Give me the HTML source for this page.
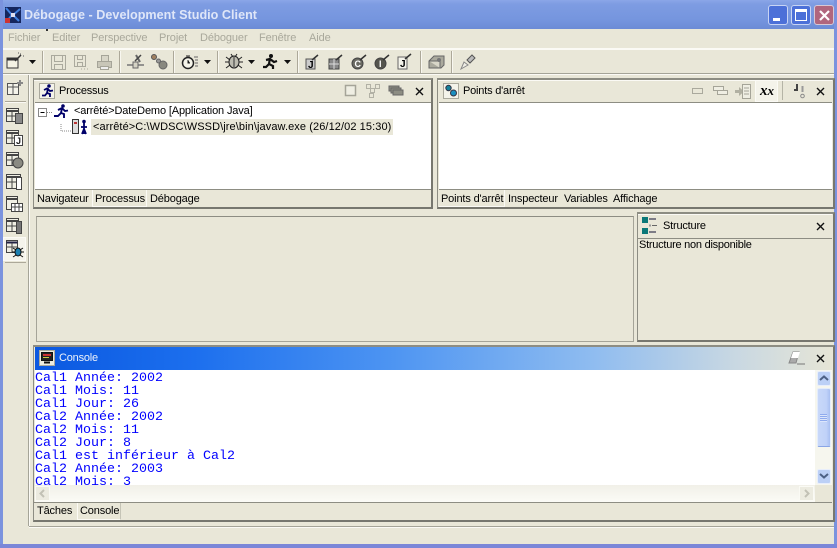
<!DOCTYPE html>
<html><head><meta charset="utf-8"><style>
*{box-sizing:border-box}
html,body{margin:0;padding:0}
body{width:837px;height:548px;position:relative;overflow:hidden;background:#e9e7d8;font-family:"Liberation Sans",sans-serif;font-size:11px;color:#000}
.a{position:absolute}
.t{position:absolute;white-space:nowrap;line-height:14px;font-size:11px;letter-spacing:-.2px}
.panel{position:absolute;background:#e9e7d8;border:1px solid #8d8d83;border-right:2px solid #77776f;border-bottom:2px solid #77776f;border-top:2px solid #8d8d83}
.white{position:absolute;background:#fff;border-top:1px solid #8d8d83;border-bottom:1px solid #8d8d83}
.tab{position:absolute;white-space:nowrap;line-height:15px;font-size:11px;letter-spacing:-.15px}
.menu{position:absolute;top:31px;color:#a9a89b;font-size:11px;letter-spacing:-.1px;line-height:14px;white-space:nowrap}
.sep{position:absolute;height:22px;top:51px;background:#aca899;border-right:1px solid #f8f7f0;width:2px}
svg{position:absolute;overflow:visible}
.con{position:absolute;left:35px;font-family:"Liberation Mono",monospace;font-size:13.33px;line-height:13px;color:#0000ff;white-space:pre}
</style></head><body>
<!-- window frame -->
<div class="a" style="left:0;top:0;width:837px;height:29px;background:linear-gradient(#8ba6e8 0,#7e9ce2 4px,#7595de 20px,#6c8bd6 29px)"></div>
<div class="a" style="left:0;top:0;width:3px;height:548px;background:#7b93de"></div>
<div class="a" style="left:834px;top:0;width:3px;height:548px;background:#7b93de"></div>
<div class="a" style="left:0;top:544px;width:837px;height:4px;background:#7b87d8"></div>
<svg style="left:5px;top:7px" width="16" height="16"><rect width="16" height="16" fill="#15265e"/><path d="M1 1l6 7-5 6M15 2L8 8l6 6" stroke="#3f7fe0" stroke-width="2" fill="none"/><rect x="6" y="6" width="4" height="4" fill="#dde"/><rect x="0" y="11" width="5" height="5" fill="#c33"/></svg>
<div class="t" style="left:24px;top:8px;color:#dfe6f8;font-weight:bold;font-size:12.6px;letter-spacing:.02px">Débogage - Development Studio Client</div>
<!-- window buttons -->
<div class="a" style="left:768px;top:5px;width:20px;height:20px;border-radius:3px;background:#4c70d8;border:1px solid #c8d4f4"><div class="a" style="left:4px;top:12px;width:7px;height:3px;background:#fff"></div></div>
<div class="a" style="left:791px;top:5px;width:20px;height:20px;border-radius:3px;background:#4c70d8;border:1px solid #c8d4f4"><div class="a" style="left:3px;top:3px;width:12px;height:12px;border:1px solid #fff;border-top:3px solid #fff"></div></div>
<div class="a" style="left:814px;top:5px;width:20px;height:20px;border-radius:3px;background:#b0667e;border:1px solid #d8c8d4"><svg style="left:4px;top:4px" width="11" height="11"><path d="M1 1l9 9M10 1l-9 9" stroke="#fff" stroke-width="2.2"/></svg></div>
<!-- menu -->
<div class="a" style="left:3px;top:29px;width:831px;height:20px;background:#e9e7d8"></div>
<div class="menu" style="left:8px">Fichier</div>
<div class="menu" style="left:52px">Editer</div>
<div class="menu" style="left:91px">Perspective</div>
<div class="menu" style="left:159px">Projet</div>
<div class="menu" style="left:200px">Déboguer</div>
<div class="menu" style="left:259px">Fenêtre</div>
<div class="menu" style="left:309px">Aide</div>
<div class="a" style="left:46px;top:29px;width:2px;height:2px;background:#333"></div>
<div class="a" style="left:3px;top:48px;width:831px;height:2px;background:#fbfaf5"></div>
<div class="a" style="left:3px;top:73px;width:831px;height:1px;background:#a5a498"></div>
<div class="a" style="left:3px;top:74px;width:831px;height:1px;background:#fbfaf5"></div>
<!-- toolbar -->
<svg style="left:6px;top:53px" width="20" height="17"><rect x="1" y="5" width="11" height="10" fill="#f4f2e4" stroke="#333"/><rect x="1" y="5" width="11" height="2.5" fill="#333"/><path d="M9 8l6-6" stroke="#333" stroke-width="1.500"/><path d="M14 1h1M17 3h1M12 0h1" stroke="#555"/></svg>
<svg style="left:29px;top:60px" width="7" height="4"><path d="M0 0h7L3.500 4z" fill="#111"/></svg>
<div class="sep" style="left:42px"></div>
<svg style="left:51px;top:55px" width="15" height="15" fill="none" stroke="#aaa99d"><rect x=".5" y=".5" width="14" height="14"/><rect x="3.500" y=".5" width="8" height="6"/><rect x="3.500" y="9.500" width="8" height="5"/></svg>
<svg style="left:74px;top:55px" width="16" height="15" fill="none" stroke="#aaa99d"><rect x=".5" y=".5" width="11" height="11"/><rect x="3.500" y=".5" width="5" height="4"/><rect x="3.500" y="7.500" width="5" height="4"/><path d="M7 14h1M10 14h1M13 14h1"/></svg>
<svg style="left:97px;top:55px" width="16" height="15" fill="none" stroke="#a5a498"><rect x="4.500" y=".5" width="7" height="6" fill="#d8d6c8"/><rect x=".5" y="6.500" width="14" height="6" fill="#c8c6b8"/><rect x="3.500" y="11.500" width="8" height="3" fill="#eee"/></svg>
<div class="sep" style="left:119px"></div>
<svg style="left:127px;top:54px" width="18" height="16"><path d="M9 1l4 7" stroke="#666" stroke-width="2"/><path d="M0 11h17" stroke="#777" stroke-width="1.500"/><rect x="6" y="8" width="5" height="6" fill="#d5d3c5" stroke="#666"/><path d="M14 1l-6 6" stroke="#444" stroke-width="1.500"/></svg>
<svg style="left:151px;top:54px" width="17" height="16"><circle cx="3" cy="3" r="2.500" fill="#a08060" stroke="#555"/><circle cx="7.500" cy="7" r="2" fill="#999" stroke="#666"/><circle cx="12" cy="11" r="4" fill="#88887f" stroke="#666"/></svg>
<div class="sep" style="left:173px"></div>
<svg style="left:181px;top:55px" width="18" height="15"><circle cx="7" cy="8" r="5.500" fill="#f6f5ea" stroke="#222" stroke-width="1.500"/><path d="M7 5v3h2M5 1h4" stroke="#222"/><path d="M13 2h4M14 5h3M14 8h3M14 11h3" stroke="#666"/></svg>
<svg style="left:204px;top:60px" width="7" height="4"><path d="M0 0h7L3.500 4z" fill="#111"/></svg>
<div class="sep" style="left:217px"></div>
<svg style="left:225px;top:53px" width="18" height="17"><ellipse cx="9" cy="9" rx="5" ry="6" fill="#bdbcb0" stroke="#222"/><path d="M1 4l4 3M17 4l-4 3M0 9h4M14 9h4M1 15l4-3M17 15l-4-3M6 1l2 3M12 1l-2 3" stroke="#222"/><path d="M9 4v10" stroke="#333"/></svg>
<svg style="left:248px;top:60px" width="7" height="4"><path d="M0 0h7L3.500 4z" fill="#111"/></svg>
<svg style="left:262px;top:53px" width="16" height="17"><circle cx="9" cy="3" r="2" fill="#111"/><path d="M8 5l-1 6 4 2v3M7 11l-3 3H1M4 7l4-1 4 3 3-1" stroke="#111" stroke-width="2.200" fill="none"/></svg>
<svg style="left:284px;top:60px" width="7" height="4"><path d="M0 0h7L3.500 4z" fill="#111"/></svg>
<div class="sep" style="left:297px"></div>
<svg style="left:305px;top:54px" width="15" height="16"><rect x="1" y="5" width="9" height="10" fill="#ccc" stroke="#555"/><text x="3" y="14" font-family="Liberation Sans" font-size="10" font-weight="bold">J</text><path d="M7 6l6-5" stroke="#333" stroke-width="1.500"/></svg>
<svg style="left:328px;top:54px" width="16" height="16"><rect x="1" y="5" width="10" height="10" fill="#888" stroke="#444"/><path d="M6 5v10M1 10h10" stroke="#ddd"/><path d="M8 6l6-5" stroke="#333" stroke-width="1.500"/></svg>
<svg style="left:351px;top:54px" width="16" height="16"><circle cx="6.500" cy="9.500" r="5.500" fill="#6a6a62" stroke="#444"/><text x="3.500" y="13" font-family="Liberation Sans" font-size="9" font-weight="bold" fill="#fff">C</text><path d="M9 6l6-5" stroke="#333" stroke-width="1.500"/></svg>
<svg style="left:374px;top:54px" width="16" height="16"><circle cx="6.500" cy="9.500" r="5.500" fill="#55554e" stroke="#444"/><text x="5" y="13" font-family="Liberation Sans" font-size="9" font-weight="bold" fill="#fff">I</text><path d="M9 6l6-5" stroke="#333" stroke-width="1.500"/></svg>
<svg style="left:397px;top:54px" width="16" height="16"><rect x="1" y="3" width="9" height="12" fill="#f4f3ea" stroke="#666"/><text x="3" y="13" font-family="Liberation Sans" font-size="10" font-weight="bold">J</text><path d="M8 5l6-5" stroke="#333" stroke-width="1.500"/></svg>
<div class="sep" style="left:420px"></div>
<svg style="left:428px;top:55px" width="17" height="15"><path d="M1 6l5-5h10v9l-3 3H1z" fill="#aaa99d" stroke="#666"/><path d="M1 6h11v7" fill="#d8d6c8" stroke="#666"/><circle cx="11" cy="5" r="2" fill="#777"/></svg>
<div class="sep" style="left:451px"></div>
<svg style="left:460px;top:54px" width="16" height="16"><path d="M7 6l5-5 3 3-5 5z" fill="#bbb" stroke="#555"/><path d="M1 15l3-7 4 3z" fill="#f0efe6" stroke="#888"/></svg>

<!-- sidebar -->
<div class="a" style="left:28px;top:75px;width:1px;height:451px;background:#a5a498"></div>
<div class="a" style="left:29px;top:75px;width:1px;height:451px;background:#fbfaf5"></div>
<svg style="left:7px;top:80px" width="17" height="16" fill="none" stroke="#555"><rect x=".5" y="3.500" width="11" height="11" fill="#f4f3ea"/><path d="M.5 7h11M6 3.500v11"/><path d="M13 0v6M10 3h6" stroke="#888" stroke-width="2"/></svg>
<div class="a" style="left:5px;top:101px;width:21px;height:1px;background:#aca899"></div>
<div class="a" style="left:5px;top:102px;width:21px;height:1px;background:#fbfaf5"></div>
<svg style="left:6px;top:108px" width="18" height="17" fill="none" stroke="#444"><rect x=".5" y=".5" width="12" height="13" fill="#f0efe4"/><path d="M.5 3h12" stroke-width="2"/><path d="M.5 8h12M6 3v10"/><rect x="9.500" y="5.500" width="7" height="10" fill="#888"/></svg>
<svg style="left:6px;top:130px" width="18" height="17" fill="none" stroke="#444"><rect x=".5" y=".5" width="12" height="13" fill="#f0efe4"/><path d="M.5 3h12" stroke-width="2"/><path d="M.5 8h12M6 3v10"/><rect x="8.500" y="5.500" width="8" height="10" fill="#fff"/><text x="10" y="14" font-family="Liberation Sans" font-size="9" font-weight="bold" fill="#222" stroke="none">J</text></svg>
<svg style="left:6px;top:152px" width="18" height="17" fill="none" stroke="#444"><rect x=".5" y=".5" width="12" height="13" fill="#f0efe4"/><path d="M.5 3h12" stroke-width="2"/><path d="M.5 8h12M6 3v10"/><circle cx="12" cy="11" r="5" fill="#8a8a82"/></svg>
<svg style="left:6px;top:174px" width="18" height="17" fill="none" stroke="#444"><rect x=".5" y=".5" width="14" height="14" fill="#f0efe4"/><path d="M.5 3h14" stroke-width="2"/><path d="M.5 8h10M6 3v11"/><rect x="10.500" y="3.500" width="5" height="12" fill="#fff"/></svg>
<svg style="left:6px;top:196px" width="18" height="17" fill="none" stroke="#444"><rect x=".5" y=".5" width="11" height="13" fill="#f0efe4"/><path d="M.5 3h11" stroke-width="2"/><rect x="5.500" y="7.500" width="11" height="8" fill="#fff"/><path d="M5.500 11h11M9 7.500v8M13 7.500v8"/></svg>
<svg style="left:6px;top:218px" width="18" height="17" fill="none" stroke="#444"><rect x=".5" y=".5" width="12" height="13" fill="#f0efe4"/><path d="M.5 3h12" stroke-width="2"/><path d="M.5 8h10M6 3v10"/><rect x="10.500" y="3.500" width="5" height="12" fill="#777"/></svg>
<div class="a" style="left:3px;top:237px;width:23px;height:24px;background:#f5f4ec;border:1px solid #fbfaf5"></div>
<svg style="left:6px;top:240px" width="18" height="18" fill="none" stroke="#444"><rect x=".5" y=".5" width="11" height="12" fill="#f0efe4"/><path d="M.5 2.500h11" stroke="#224" stroke-width="2"/><path d="M.5 7h11M6 3v10"/><ellipse cx="12" cy="12" rx="3" ry="4" fill="#1a7fb0" stroke="#111"/><path d="M7 8l3 2M17 8l-3 2M6 12h3M15 12h3M7 17l3-2M17 17l-3-2" stroke="#111"/></svg>
<div class="a" style="left:5px;top:262px;width:21px;height:1px;background:#aca899"></div>
<div class="a" style="left:29px;top:526px;width:805px;height:1px;background:#a5a498"></div>
<div class="a" style="left:29px;top:527px;width:805px;height:1px;background:#fbfaf5"></div>

<!-- Processus -->
<div class="panel" style="left:33px;top:78px;width:400px;height:131px"></div>
<div class="a" style="left:34px;top:80px;width:397px;height:1px;background:#fbfaf5"></div>
<div class="a" style="left:39px;top:83px;width:16px;height:16px;background:#f4f3ea;border:1px solid #aaa99d"></div>
<svg style="left:41px;top:84px" width="13" height="14"><circle cx="8" cy="2" r="1.800" fill="#006"/><path d="M7 4l-1 5 3 1v3M6 9l-2 2.500H1M3 6l3-1.500 3 2.500 3-.5" stroke="#006" stroke-width="1.800" fill="none"/></svg>
<div class="t" style="left:59px;top:84px">Processus</div>
<svg style="left:345px;top:85px" width="11" height="11"><rect x=".5" y=".5" width="10" height="10" fill="#efeee3" stroke="#a5a498" stroke-width="1.500"/></svg>
<svg style="left:366px;top:84px" width="15" height="14" fill="none" stroke="#b2b1a5"><rect x=".5" y=".5" width="4" height="4"/><rect x="9.500" y=".5" width="4" height="4"/><rect x="4.500" y="4.500" width="4" height="4"/><rect x="3.500" y="9.500" width="4" height="4"/></svg>
<svg style="left:389px;top:86px" width="15" height="11"><rect x="0" y="0" width="10" height="5" fill="#8d8d83" stroke="#666"/><rect x="2" y="2" width="10" height="5" fill="#8d8d83" stroke="#666"/><rect x="4" y="4" width="10" height="5" fill="#8d8d83" stroke="#666"/></svg>
<svg style="left:415px;top:87px" width="9" height="9"><path d="M1 1l7 7M8 1L1 8" stroke="#111" stroke-width="1.400"/></svg>
<div class="white" style="left:35px;top:102px;width:396px;height:88px"></div>
<svg style="left:38px;top:106px" width="60" height="36"><rect x=".5" y="2.500" width="8" height="8" fill="#fff" stroke="#888"/><path d="M2.500 6.500h4" stroke="#000"/><path d="M9 6.500h6M23 18v7h10" stroke="#888" stroke-dasharray="1 1" fill="none"/></svg>
<svg style="left:54px;top:104px" width="15" height="15"><circle cx="9" cy="2" r="1.800" fill="#006"/><path d="M8 4l-1 5 3 1v4M7 9l-3 3H0M4 6l4-2 3 3 3-.5" stroke="#00006a" stroke-width="1.900" fill="none"/></svg>
<div class="t" style="left:74px;top:104px;letter-spacing:-.14px">&lt;arrêté&gt;DateDemo [Application Java]</div>
<svg style="left:72px;top:119px" width="18" height="16"><rect x=".5" y=".5" width="6" height="14" fill="#ddd" stroke="#333"/><rect x="2" y="3" width="3" height="2" fill="#b33"/><circle cx="12" cy="2.500" r="1.800" fill="#006"/><path d="M12 4v11M9 8h6M12 10l-2 5M12 10l2 5" stroke="#00006a" stroke-width="1.800"/></svg>
<div class="a" style="left:91px;top:119px;width:302px;height:16px;background:#e9e7d8"></div>
<div class="t" style="left:93px;top:120px;letter-spacing:.09px">&lt;arrêté&gt;C:\WDSC\WSSD\jre\bin\javaw.exe (26/12/02 15:30)</div>
<div class="tab" style="left:37px;top:192px">Navigateur</div>
<div class="a" style="left:92px;top:190px;width:55px;height:17px;border-left:1px solid #fbfaf5;border-right:1px solid #fbfaf5;border-bottom:1px solid #fbfaf5"></div>
<div class="tab" style="left:95px;top:192px">Processus</div>
<div class="tab" style="left:150px;top:192px">Débogage</div>

<!-- Points d'arret -->
<div class="panel" style="left:437px;top:78px;width:398px;height:131px"></div>
<div class="a" style="left:438px;top:80px;width:394px;height:1px;background:#fbfaf5"></div>
<div class="a" style="left:443px;top:83px;width:16px;height:16px;background:#f4f3ea;border:1px solid #aaa99d"></div>
<svg style="left:445px;top:85px" width="13" height="12"><circle cx="3.500" cy="3" r="2.700" fill="#16829c" stroke="#334"/><circle cx="8.500" cy="8" r="3" fill="#1b8fc0" stroke="#334"/></svg>
<div class="t" style="left:463px;top:84px">Points d'arrêt</div>
<svg style="left:692px;top:88px" width="11" height="6"><rect x=".5" y=".5" width="10" height="5" fill="none" stroke="#aaa99d"/></svg>
<svg style="left:713px;top:86px" width="16" height="10" fill="none" stroke="#a5a498"><rect x=".5" y=".5" width="10" height="4" fill="#efeee3"/><rect x="4.500" y="4.500" width="10" height="4" fill="#efeee3"/></svg>
<svg style="left:735px;top:84px" width="16" height="15"><path d="M0 6h4V3l5 4.500-5 4.500V9H0z" fill="#b1b0a2"/><rect x="7.500" y=".5" width="8" height="14" fill="#efeee3" stroke="#a5a498"/><path d="M9 4h5M9 7h5M9 10h5" stroke="#a5a498"/></svg>
<div class="a" style="left:755px;top:80px;width:23px;height:22px;background:#f4f3ea;border:1px solid #fbfaf5"></div>
<div class="t" style="left:760px;top:84px;font-family:'Liberation Serif',serif;font-style:italic;font-weight:bold;font-size:15px;letter-spacing:0">x<span style="font-size:13px">x</span></div>
<div class="a" style="left:782px;top:81px;width:1px;height:19px;background:#b5b4a6"></div>
<svg style="left:792px;top:83px" width="13" height="16"><path d="M5 1v6H2" stroke="#444" stroke-width="2" fill="none"/><path d="M10.500 3v6" stroke="#999" stroke-width="2"/><circle cx="10.500" cy="13" r="1.800" fill="none" stroke="#888"/></svg>
<svg style="left:816px;top:87px" width="9" height="9"><path d="M1 1l7 7M8 1L1 8" stroke="#111" stroke-width="1.400"/></svg>
<div class="white" style="left:439px;top:102px;width:393px;height:88px"></div>
<div class="a" style="left:439px;top:190px;width:66px;height:17px;border-right:1px solid #fbfaf5;border-bottom:1px solid #fbfaf5"></div>
<div class="tab" style="left:441px;top:192px">Points d'arrêt</div>
<div class="tab" style="left:508px;top:192px">Inspecteur</div>
<div class="tab" style="left:564px;top:192px">Variables</div>
<div class="tab" style="left:613px;top:192px">Affichage</div>

<!-- editor -->
<div class="a" style="left:36px;top:216px;width:598px;height:126px;background:#e9e7d8;border:1px solid #a5a498;border-top:1px solid #8d8d83"></div>

<!-- Structure -->
<div class="panel" style="left:637px;top:212px;width:198px;height:130px"></div>
<div class="a" style="left:638px;top:214px;width:194px;height:1px;background:#fbfaf5"></div>
<svg style="left:642px;top:217px" width="16" height="18"><rect width="6" height="6" fill="#0a7878"/><rect y="11" width="6" height="6" fill="#0a7878"/><path d="M7 2h7M7 15h7" stroke="#113"/><rect x="7" y="7.500" width="2" height="2" fill="#999"/><path d="M10 8.500h5" stroke="#666"/></svg>
<div class="t" style="left:663px;top:219px">Structure</div>
<svg style="left:816px;top:222px" width="9" height="9"><path d="M1 1l7 7M8 1L1 8" stroke="#111" stroke-width="1.400"/></svg>
<div class="a" style="left:638px;top:238px;width:194px;height:1px;background:#8d8d83"></div>
<div class="t" style="left:639px;top:238px;letter-spacing:-.25px">Structure non disponible</div>

<!-- Console -->
<div class="panel" style="left:33px;top:345px;width:802px;height:177px"></div>
<div class="a" style="left:35px;top:347px;width:797px;height:23px;background:linear-gradient(90deg,#0a58e0 0,#1c6fee 20%,#4e95f2 45%,#8fbcf0 70%,#c9d8e2 88%,#e6e5d6 100%)"></div>
<div class="a" style="left:39px;top:350px;width:16px;height:16px;background:#eeede0;border:1px solid #aaa99d"></div>
<svg style="left:41px;top:352px" width="12" height="12"><rect x=".5" y=".5" width="11" height="8" fill="#222" stroke="#111"/><rect x="2" y="2" width="8" height="2" fill="#c33"/><rect x="2" y="5" width="6" height="1" fill="#cc4"/><path d="M3 10.500h6" stroke="#111" stroke-width="2"/></svg>
<div class="t" style="left:59px;top:351px;color:#eef3fb">Console</div>
<svg style="left:788px;top:350px" width="17" height="15"><path d="M1 13l4-11h6l-3 11z" fill="#aaa" stroke="#888"/><path d="M5 2h7l-2 6H3z" fill="#fff"/><path d="M9 14h8" stroke="#777"/></svg>
<svg style="left:816px;top:354px" width="9" height="9"><path d="M1 1l7 7M8 1L1 8" stroke="#111" stroke-width="1.400"/></svg>
<div class="a" style="left:35px;top:370px;width:781px;height:115px;background:#fff;overflow:hidden">
<div class="con" style="left:0;top:2px">Cal1 Année: 2002
Cal1 Mois: 11
Cal1 Jour: 26
Cal2 Année: 2002
Cal2 Mois: 11
Cal2 Jour: 8
Cal1 est inférieur à Cal2
Cal2 Année: 2003
Cal2 Mois: 3</div></div>
<!-- v scrollbar -->
<div class="a" style="left:815px;top:370px;width:17px;height:115px;background:#f6f6ee"></div>
<div class="a" style="left:817px;top:371px;width:14px;height:15px;background:#bcd0f6;border:1px solid #e8eefb;border-radius:2px"></div>
<svg style="left:819px;top:375px" width="10" height="6"><path d="M1 5l4-3.500L9 5" stroke="#4d6185" stroke-width="2" fill="none"/></svg>
<div class="a" style="left:817px;top:388px;width:14px;height:59px;background:linear-gradient(90deg,#c8d8f9,#c0d2f8 70%,#a8bff1);border:1px solid #e4ecfb;border-bottom:1px solid #8aa6e6;border-radius:2px"></div>
<div class="a" style="left:820px;top:414px;width:7px;height:8px;background:repeating-linear-gradient(#8fabee 0,#8fabee 1px,#dce6fb 1px,#dce6fb 2px)"></div>
<div class="a" style="left:817px;top:469px;width:14px;height:15px;background:#bcd0f6;border:1px solid #e8eefb;border-radius:2px"></div>
<svg style="left:819px;top:473px" width="10" height="6"><path d="M1 1l4 3.500L9 1" stroke="#4d6185" stroke-width="2" fill="none"/></svg>
<!-- h scrollbar -->
<div class="a" style="left:35px;top:485px;width:780px;height:17px;background:linear-gradient(#f1f0e8,#fbfbf6)"></div>
<div class="a" style="left:35px;top:486px;width:15px;height:15px;background:#ecebe0;border:1px solid #fafaf4"></div>
<svg style="left:39px;top:489px" width="6" height="9"><path d="M5 1L1.500 4.500 5 8" stroke="#c2c1b5" stroke-width="2" fill="none"/></svg>
<div class="a" style="left:799px;top:486px;width:15px;height:15px;background:#ecebe0;border:1px solid #fafaf4"></div>
<svg style="left:804px;top:489px" width="6" height="9"><path d="M1 1l3.500 3.500L1 8" stroke="#c2c1b5" stroke-width="2" fill="none"/></svg>
<div class="a" style="left:34px;top:502px;width:798px;height:1px;background:#8d8d83"></div>
<div class="tab" style="left:37px;top:504px">Tâches</div>
<div class="a" style="left:77px;top:503px;width:44px;height:17px;border-left:1px solid #fbfaf5;border-right:1px solid #c5c4b6;border-bottom:1px solid #fbfaf5"></div>
<div class="tab" style="left:80px;top:504px">Console</div>
</body></html>
